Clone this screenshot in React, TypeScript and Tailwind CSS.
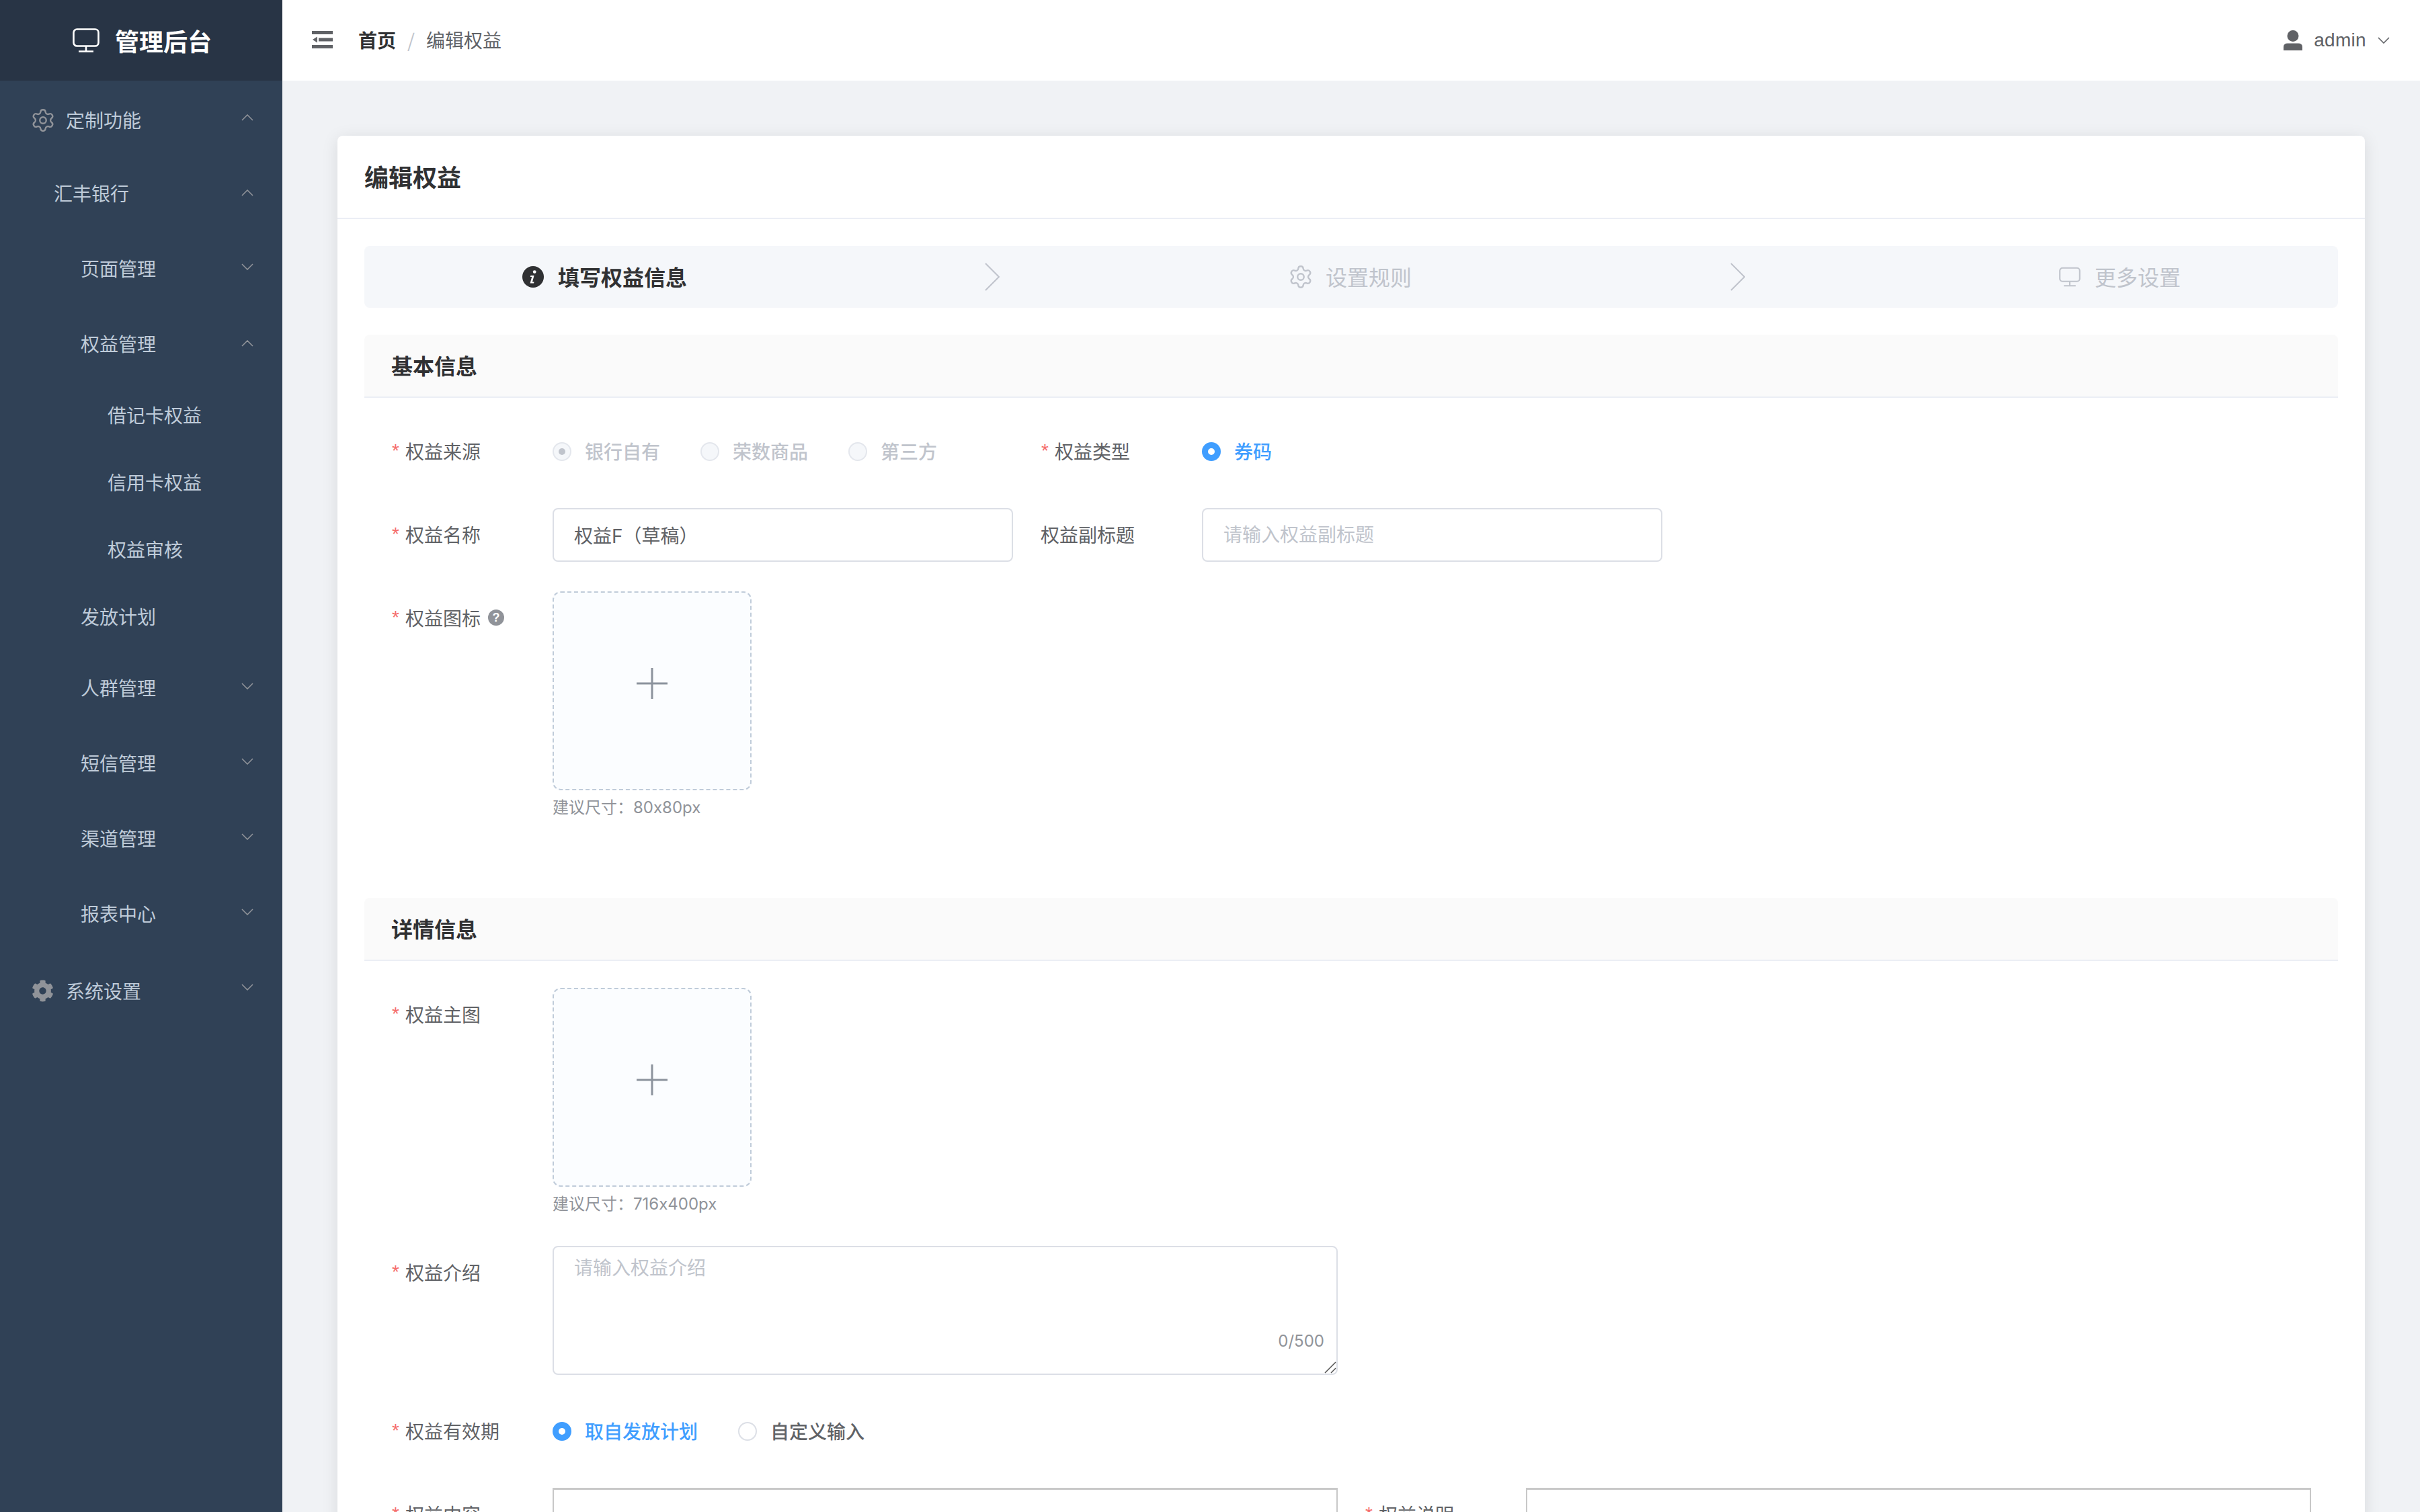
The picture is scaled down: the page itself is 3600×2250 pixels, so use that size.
import React from "react";
import { Settings } from "lucide-react";
import { FaCog } from "react-icons/fa";

const Chevron = ({ up = false, className = "" }: { up?: boolean; className?: string }) => (
  <svg width="18" height="10" viewBox="0 0 18 10" fill="none" className={className}>
    <path d={up ? "M1 9 L9 1 L17 9" : "M1 1 L9 9 L17 1"} stroke="currentColor" strokeWidth="1.6" />
  </svg>
);

const MonitorIcon = ({ className = "" }: { className?: string }) => (
  <svg viewBox="0 0 40 36" fill="none" stroke="currentColor" strokeWidth="2.6" className={className}>
    <rect x="1.5" y="1.5" width="37" height="25" rx="5" />
    <path d="M20 27 V34.5 M9 34.5 H31" />
  </svg>
);

const StepArrow = () => (
  <svg width="22" height="42" viewBox="0 0 22 42" fill="none" className="shrink-0 text-[#c0c4cc]">
    <path d="M1 1 L21 21 L1 41" stroke="currentColor" strokeWidth="2" />
  </svg>
);

const Hamburger = () => (
  <svg width="31" height="26" viewBox="0 0 31 26" className="shrink-0 mb-[2px] text-[#606266]">
    <rect x="0" y="0" width="31" height="5" fill="currentColor" />
    <rect x="10" y="10.5" width="21" height="5" fill="currentColor" />
    <path d="M1 13 L8 8.5 V17.5 Z" fill="currentColor" />
    <rect x="0" y="21" width="31" height="5" fill="currentColor" />
  </svg>
);

const InfoIcon = () => (
  <svg width="32" height="32" viewBox="0 0 32 32" className="shrink-0">
    <circle cx="16" cy="16" r="16" fill="#303133" />
    <circle cx="18.2" cy="8.6" r="2.4" fill="#fff" />
    <path d="M12.4 14 H17.6 L15 23.4 H17.6 L17 25.4 H11.6 L14.2 16 H11.9 Z" fill="#fff" />
  </svg>
);

const UserIcon = () => (
  <svg width="28" height="30" viewBox="0 0 28 30" className="shrink-0 text-[#606266]">
    <circle cx="14" cy="8.5" r="8.5" fill="currentColor" />
    <path d="M0 25 Q0 19.5 6 19.5 H22 Q28 19.5 28 25 V30 H0 Z" fill="currentColor" />
  </svg>
);

type MenuRow = {
  label: string;
  indent: string;
  h: string;
  arrow?: "up" | "down";
  icon?: "outline" | "solid";
};

const menu: MenuRow[] = [
  { label: "定制功能", indent: "pl-[98px]", h: "h-[112px]", arrow: "up", icon: "outline" },
  { label: "汇丰银行", indent: "pl-[80px]", h: "h-[112px]", arrow: "up" },
  { label: "页面管理", indent: "pl-[120px]", h: "h-[112px]", arrow: "down" },
  { label: "权益管理", indent: "pl-[120px]", h: "h-[112px]", arrow: "up" },
  { label: "借记卡权益", indent: "pl-[160px]", h: "h-[100px]" },
  { label: "信用卡权益", indent: "pl-[160px]", h: "h-[100px]" },
  { label: "权益审核", indent: "pl-[160px]", h: "h-[100px]" },
  { label: "发放计划", indent: "pl-[120px]", h: "h-[100px]" },
  { label: "人群管理", indent: "pl-[120px]", h: "h-[112px]", arrow: "down" },
  { label: "短信管理", indent: "pl-[120px]", h: "h-[112px]", arrow: "down" },
  { label: "渠道管理", indent: "pl-[120px]", h: "h-[112px]", arrow: "down" },
  { label: "报表中心", indent: "pl-[120px]", h: "h-[112px]", arrow: "down" },
  { label: "系统设置", indent: "pl-[98px]", h: "h-[112px]", arrow: "down", icon: "solid" },
];

const Sidebar = () => (
  <aside className="w-[420px] shrink-0 h-full bg-[#304156]">
    <div className="h-[120px] bg-[#283445] flex items-center pl-[108px]">
      <MonitorIcon className="w-[40px] h-[36px] text-white" />
      <span className="ml-[23px] text-[36px] leading-[50px] font-semibold text-white">管理后台</span>
    </div>
    {menu.map((row) => (
      <div
        key={row.label}
        className={`${row.h} ${row.indent} relative flex items-center justify-between pr-[43px] text-[28px] text-[#bfcbd9]`}
      >
        {row.icon === "outline" && (
          <Settings size={38} strokeWidth={1.5} className="absolute left-[45px] top-[40px] text-[#909399]" />
        )}
        {row.icon === "solid" && <FaCog size={33} className="absolute left-[47px] top-[42px] text-[#909399]" />}
        <span className={row.icon ? "mt-[4px] leading-[40px]" : "mb-[2px] leading-[40px]"}>{row.label}</span>
        {row.arrow && (
          <Chevron up={row.arrow === "up"} className={row.arrow === "up" ? "mb-[2px] text-[#909399]" : "mb-[6px] text-[#909399]"} />
        )}
      </div>
    ))}
  </aside>
);

const Navbar = () => (
  <header className="h-[120px] shrink-0 bg-white flex items-center pl-[44px] pr-[44px]">
    <Hamburger />
    <nav className="ml-[38px] mb-[2px] flex items-center text-[28px] leading-[40px]">
      <span className="font-semibold text-[#303133]">首页</span>
      <span className="mx-[17px] text-[#c0c4cc]">/</span>
      <span className="text-[#606266]">编辑权益</span>
    </nav>
    <div className="ml-auto flex items-center text-[#606266]">
      <UserIcon />
      <span className="ml-[17px] text-[28px] leading-[40px] tracking-[0.3px] font-['Liberation_Sans',sans-serif]">admin</span>
      <Chevron className="ml-[16px] w-[20px]" />
    </div>
  </header>
);

const Step = ({ title, icon, active = false }: { title: string; icon: React.ReactNode; active?: boolean }) => (
  <div className={`flex items-center shrink-0 text-[32px] leading-[44px] ${active ? "font-semibold text-[#303133]" : "text-[#c0c4cc]"}`}>
    {icon}
    <span className="ml-[21px] mb-[2px]">{title}</span>
  </div>
);

const Steps = () => (
  <div className="h-[92px] rounded-[8px] bg-[#f5f7fa] flex items-center pl-[235px]">
    <Step active title="填写权益信息" icon={<InfoIcon />} />
    <div className="ml-[443px] mr-[432px]">
      <StepArrow />
    </div>
    <Step title="设置规则" icon={<Settings size={38} strokeWidth={1.5} className="shrink-0 -mx-[3px]" />} />
    <div className="ml-[474px] mr-[467px]">
      <StepArrow />
    </div>
    <Step title="更多设置" icon={<MonitorIcon className="w-[32px] h-[30px] shrink-0" />} />
  </div>
);

const SectionHeader = ({ title }: { title: string }) => (
  <div className="h-[94px] rounded-t-[8px] bg-[#fafafa] border-b-2 border-[#ebeef5] flex items-center pl-[40px]">
    <h3 className="mb-[2px] text-[32px] leading-[44px] font-semibold text-[#303133]">{title}</h3>
  </div>
);

const Field = ({
  label,
  required = true,
  extra,
  className = "",
  children,
}: {
  label: string;
  required?: boolean;
  extra?: React.ReactNode;
  className?: string;
  children: React.ReactNode;
}) => (
  <div className={`flex ${className}`}>
    <label className="w-[240px] shrink-0 h-[80px] pb-[2px] flex items-center text-[28px] text-[#606266]">
      {required && <span className="w-[21px] pl-[1px] text-[#f56c6c] font-['Liberation_Sans',sans-serif]">*</span>}
      <span>{label}</span>
      {extra}
    </label>
    <div className="flex-1 min-w-0">{children}</div>
  </div>
);

const Radio = ({ label, checked = false, disabled = false }: { label: string; checked?: boolean; disabled?: boolean }) => {
  let circle = "bg-white border-[#dcdfe6]";
  let text = "text-[#606266]";
  if (disabled) {
    circle = "bg-[#f5f7fa] border-[#e4e7ed]";
    text = "text-[#c0c4cc]";
  } else if (checked) {
    circle = "bg-[#409eff] border-[#409eff]";
    text = "text-[#409eff]";
  }
  return (
    <div className="flex items-center">
      <span className={`w-[28px] h-[28px] rounded-full border-2 flex items-center justify-center ${circle}`}>
        {checked && <span className={`w-[10px] h-[10px] rounded-full ${disabled ? "bg-[#c0c4cc]" : "bg-white"}`} />}
      </span>
      <span className={`ml-[20px] mb-[2px] text-[28px] leading-[40px] font-medium ${text}`}>{label}</span>
    </div>
  );
};

const RadioRow = ({ children }: { children: React.ReactNode }) => <div className="h-[80px] flex items-center gap-x-[60px]">{children}</div>;

const TextInput = ({ value, placeholder }: { value?: string; placeholder?: string }) => (
  <input
    readOnly
    value={value ?? ""}
    placeholder={placeholder}
    className="w-[685px] h-[80px] px-[30px] rounded-[8px] border-2 border-[#dcdfe6] bg-white text-[28px] text-[#606266] outline-none placeholder:text-[#c0c4cc] font-['Inter','Noto_Sans_CJK_SC',sans-serif]"
  />
);

const Upload = ({ hint }: { hint: string }) => (
  <>
    <div className="w-[296px] h-[296px] rounded-[12px] border-2 border-dashed border-[#c0ccda] bg-[#fbfdff] flex items-center justify-center pb-[22px]">
      <svg width="46" height="46" viewBox="0 0 46 46" className="text-[#8c939d]">
        <path d="M23 0 V46 M0 23 H46" stroke="currentColor" strokeWidth="3" />
      </svg>
    </div>
    <p className="mt-[8px] h-[36px] text-[24px] leading-[36px] text-[#909399] font-['Inter','Noto_Sans_CJK_SC',sans-serif]">{hint}</p>
  </>
);

const TextArea = () => (
  <div className="relative w-[1168px] h-[192px]">
    <textarea
      readOnly
      placeholder="请输入权益介绍"
      className="block w-full h-full px-[30px] py-[8px] resize-none rounded-[8px] border-2 border-[#dcdfe6] bg-white text-[28px] leading-[42px] outline-none placeholder:text-[#c0c4cc]"
    />
    <span className="absolute right-[20px] bottom-[32px] text-[24px] leading-[36px] text-[#909399] font-['Inter',sans-serif]">0/500</span>
    <svg width="18" height="18" viewBox="0 0 18 18" className="absolute right-[2px] bottom-[2px] text-[#555]">
      <path d="M1 17 L17 1 M10 17 L17 10" stroke="currentColor" strokeWidth="1.5" />
    </svg>
  </div>
);

const EditorBox = () => <div className="w-[1168px] h-[200px] border-x-2 border-t-[3px] border-[#c8c8c8] bg-white" />;

const HelpBadge = () => (
  <span className="ml-[11px] w-[24px] h-[24px] rounded-full bg-[#909399] flex items-center justify-center text-[18px] leading-none font-bold text-white font-['Liberation_Sans',sans-serif]">
    ?
  </span>
);

const App: React.FC = () => {
  return (
    <div className="w-[3600px] h-[2250px] overflow-hidden flex font-['Noto_Sans_CJK_SC','Liberation_Sans',sans-serif]">
      <Sidebar />
      <div className="flex-1 min-w-0 h-full flex flex-col bg-[#f0f2f5]">
        <Navbar />
        <main className="flex-1 min-h-0 overflow-hidden pt-[82px] px-[82px]">
          <section className="rounded-[8px] bg-white shadow-[0_4px_24px_rgba(0,0,0,0.1)]">
            <div className="h-[124px] border-b-2 border-[#ebeef5] flex items-center pl-[40px]">
              <h2 className="mb-[2px] text-[36px] leading-[50px] font-semibold text-[#303133]">编辑权益</h2>
            </div>
            <div className="p-[40px]">
              <Steps />

              <div className="mt-[40px]">
                <SectionHeader title="基本信息" />
                <div className="pt-[40px] pl-[40px]">
                  <div className="grid grid-cols-[926px_926px] gap-x-[40px] gap-y-[44px]">
                    <Field label="权益来源">
                      <RadioRow>
                        <Radio disabled checked label="银行自有" />
                        <Radio disabled label="荣数商品" />
                        <Radio disabled label="第三方" />
                      </RadioRow>
                    </Field>
                    <Field label="权益类型">
                      <RadioRow>
                        <Radio checked label="券码" />
                      </RadioRow>
                    </Field>
                    <Field label="权益名称">
                      <TextInput value="权益F（草稿）" />
                    </Field>
                    <Field label="权益副标题" required={false}>
                      <TextInput placeholder="请输入权益副标题" />
                    </Field>
                  </div>
                  <Field label="权益图标" extra={<HelpBadge />} className="mt-[44px] mb-[116px]">
                    <Upload hint="建议尺寸：80x80px" />
                  </Field>
                </div>
              </div>

              <SectionHeader title="详情信息" />
              <div className="pt-[40px] pl-[40px]">
                <Field label="权益主图" className="mb-[44px]">
                  <Upload hint="建议尺寸：716x400px" />
                </Field>
                <Field label="权益介绍" className="mb-[44px]">
                  <TextArea />
                </Field>
                <Field label="权益有效期" className="mb-[44px]">
                  <RadioRow>
                    <Radio checked label="取自发放计划" />
                    <Radio label="自定义输入" />
                  </RadioRow>
                </Field>
                <div className="grid grid-cols-[1408px_1408px] gap-x-[40px]">
                  <Field label="权益内容">
                    <EditorBox />
                  </Field>
                  <Field label="权益说明">
                    <EditorBox />
                  </Field>
                </div>
              </div>
            </div>
          </section>
        </main>
      </div>
    </div>
  );
};

export default App;
